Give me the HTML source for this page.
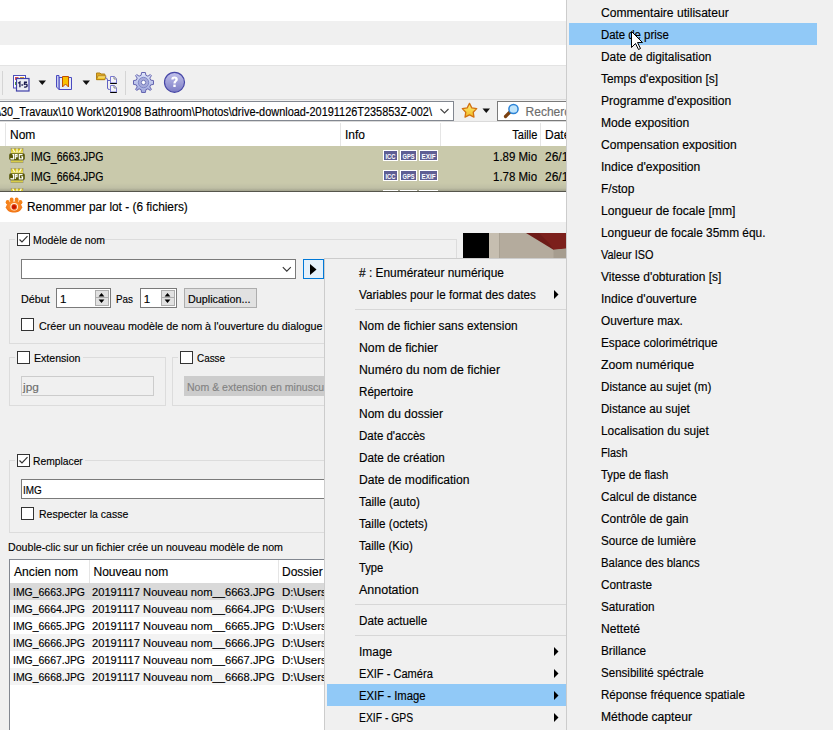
<!DOCTYPE html>
<html><head><meta charset="utf-8"><style>
html,body{margin:0;padding:0;width:833px;height:730px;overflow:hidden;background:#f0f0f0;font-family:"Liberation Sans", sans-serif;}
#root{position:relative;width:833px;height:730px;overflow:hidden;}
</style></head><body><div id="root">
<div style="position:absolute;left:0px;top:0px;width:566px;height:21px;background:#fff"></div>
<div style="position:absolute;left:0px;top:21px;width:566px;height:24px;background:#f0f0f0"></div>
<div style="position:absolute;left:0px;top:45px;width:566px;height:20px;background:#fff"></div>
<div style="position:absolute;left:0px;top:65px;width:566px;height:1px;background:#e3e3e3"></div>
<div style="position:absolute;left:0px;top:66px;width:566px;height:33px;background:#f0f0f0"></div>
<div style="position:absolute;left:2px;top:71px;width:1px;height:24px;background:#d5d5d5"></div>
<div style="position:absolute;left:125px;top:71px;width:1px;height:24px;background:#d5d5d5"></div>
<svg style="position:absolute;left:12px;top:74px" width="19" height="18">
<rect x="1.5" y="1.5" width="12" height="12.5" fill="#fff" stroke="#5050b8" stroke-width="1"/>
<rect x="3" y="3" width="3.5" height="3" fill="#e05050"/><rect x="8" y="3" width="4" height="2.5" fill="#f0a020"/><rect x="3" y="8" width="1.5" height="3" fill="#50a030"/>
<rect x="4.5" y="4.5" width="12.5" height="12.5" fill="#eceef4" stroke="#4040a8" stroke-width="1.2"/>
<path d="M6.2 9.3 L7.9 8 L7.9 13.2 M9.4 11 L10.9 11 M15 8.2 L12.6 8.2 L12.4 10.4 C14.6 9.8 15.2 10.7 15.1 11.6 C15 13 13.6 13.4 12.1 12.9" fill="none" stroke="#1c1c50" stroke-width="1.35"/>
</svg>
<svg style="position:absolute;left:38px;top:80px" width="9" height="6"><path d="M0.5 0.5 L8 0.5 L4.25 5 Z" fill="#111"/></svg>
<svg style="position:absolute;left:55px;top:74px" width="18" height="17">
<path d="M4 3.5 L16.5 3.5 L16.5 15.5 L4 15.5 Z" fill="#e8ecf6" stroke="#4a4ac0"/>
<path d="M1.5 1.5 L4 1.5 L4 15.5 L1.5 13 Z" fill="#c8cef0" stroke="#4a4ac0"/>
<path d="M7.5 2.5 L13.5 2.5 L13.5 13 L10.5 10 L7.5 13 Z" fill="#f8c000" stroke="#c05000"/>
</svg>
<svg style="position:absolute;left:82px;top:80px" width="9" height="6"><path d="M0.5 0.5 L8 0.5 L4.25 5 Z" fill="#111"/></svg>
<svg style="position:absolute;left:95px;top:71px" width="24" height="23">
<defs><linearGradient id="fg" x1="0" y1="0" x2="0" y2="1"><stop offset="0" stop-color="#fff0a0"/><stop offset="1" stop-color="#f0b800"/></linearGradient></defs>
<path d="M1.5 2 L5 2 L6 3 L9.8 3 L9.8 8.6 L1.5 8.6 Z" fill="#e0a820" stroke="#b08018" stroke-width="1"/>
<path d="M3 4.8 L11 4.8 L9.8 8.6 L1.5 8.6 Z" fill="url(#fg)" stroke="#b08018" stroke-width="0.9"/>
<path d="M10.2 6.8 Q12.5 6.8 12.5 9 L12.5 17 Q12.5 18.5 14.5 18.5 L15.5 18.5 M12.5 9.5 L15.5 9.5" fill="none" stroke="#6262c4" stroke-width="1"/>
<path d="M15.5 5.5 L19.3 5.5 L21.5 7.7 L21.5 12 L15.5 12 Z" fill="#f4f4f8" stroke="#7878d4"/>
<path d="M19 5.5 L19 8 L21.5 8" fill="none" stroke="#888"/>
<rect x="15.2" y="12" width="6.6" height="1" fill="#000"/>
<path d="M15.5 14.5 L19.3 14.5 L21.5 16.7 L21.5 21 L15.5 21 Z" fill="#f4f4f8" stroke="#7878d4"/>
<path d="M19 14.5 L19 17 L21.5 17" fill="none" stroke="#888"/>
<rect x="15.2" y="21" width="6.6" height="1" fill="#000"/>
</svg>
<svg style="position:absolute;left:132px;top:71px" width="23" height="23">
<defs><linearGradient id="gg" x1="0" y1="0" x2="0" y2="1"><stop offset="0" stop-color="#dfe6fb"/><stop offset="1" stop-color="#9ea6dc"/></linearGradient></defs>
<path fill="url(#gg)" stroke="#6464b0" stroke-width="1" d="M9.6 1.5 L13.4 1.5 L13.9 4.3 L15.9 5.2 L18.3 3.6 L19.4 4.7 L17.8 7.1 L18.7 9.1 L21.5 9.6 L21.5 13.4 L18.7 13.9 L17.8 15.9 L19.4 18.3 L18.3 19.4 L15.9 17.8 L13.9 18.7 L13.4 21.5 L9.6 21.5 L9.1 18.7 L7.1 17.8 L4.7 19.4 L3.6 18.3 L5.2 15.9 L4.3 13.9 L1.5 13.4 L1.5 9.6 L4.3 9.1 L5.2 7.1 L3.6 4.7 L4.7 3.6 L7.1 5.2 L9.1 4.3 Z"/>
<circle cx="11.5" cy="11.5" r="5.2" fill="#a6aada" stroke="#8088c8"/>
<circle cx="11.5" cy="11.5" r="2.2" fill="#fff" stroke="#7078b8"/>
</svg>
<svg style="position:absolute;left:163px;top:71px" width="23" height="23">
<defs><linearGradient id="hg" x1="0" y1="0" x2="0" y2="1"><stop offset="0" stop-color="#c2c2ec"/><stop offset="1" stop-color="#7c7cc4"/></linearGradient></defs>
<circle cx="11.5" cy="11.3" r="10" fill="url(#hg)" stroke="#4646a6" stroke-width="1.2"/>
<path d="M8.3 8.6 C8.3 6.2 9.8 5.6 11.5 5.6 C13.4 5.6 14.8 6.6 14.8 8.4 C14.8 10.4 12.6 10.6 12.6 12.4 L10.4 12.4 C10.4 10 12.4 9.8 12.4 8.6 C12.4 7.8 12 7.5 11.5 7.5 C10.9 7.5 10.6 7.9 10.6 8.6 Z" fill="#fff"/>
<rect x="10.3" y="13.6" width="2.4" height="2.4" fill="#fff"/>
</svg>
<div style="position:absolute;left:0px;top:99px;width:566px;height:1px;background:#dadada"></div>
<div style="position:absolute;left:0px;top:100px;width:566px;height:22px;background:#f0f0f0"></div>
<div style="position:absolute;left:-1px;top:101px;width:455px;height:20px;background:#fff;border:1px solid #828790;box-sizing:border-box"></div>
<div style="position:absolute;left:0px;top:121px;width:566px;height:1px;background:#dadada"></div>
<div style="position:absolute;left:0px;top:102px;width:440px;height:18px;overflow:hidden">
<div style='position:absolute;left:-2.00px;top:4px;font:normal 12px/12px "Liberation Sans", sans-serif;color:#000;white-space:pre;-webkit-text-stroke:0.15px currentColor;transform:scaleX(0.9103);transform-origin:left top;'>\30_Travaux\10 Work\201908 Bathroom\Photos\drive-download-20191126T235853Z-002\</div>
</div>
<svg style="position:absolute;left:440px;top:108px" width="10" height="7"><path d="M0.5 1 L4.5 5 L8.5 1" fill="none" stroke="#444" stroke-width="1.1"/></svg>
<svg style="position:absolute;left:461px;top:102px" width="17" height="17">
<defs><linearGradient id="sg" x1="0" y1="0" x2="0" y2="1"><stop offset="0" stop-color="#fff27a"/><stop offset="1" stop-color="#f0b820"/></linearGradient></defs>
<path d="M8.50 1.40 L10.79 5.84 L15.73 6.65 L12.21 10.21 L12.97 15.15 L8.50 12.90 L4.03 15.15 L4.79 10.21 L1.27 6.65 L6.21 5.84 Z" fill="url(#sg)" stroke="#d27212" stroke-width="1.3" stroke-linejoin="round"/>
</svg>
<svg style="position:absolute;left:482px;top:108px" width="9" height="6"><path d="M0.5 0.5 L8 0.5 L4.25 5 Z" fill="#111"/></svg>
<div style="position:absolute;left:497px;top:101px;width:80px;height:20px;background:#fff;border:1px solid #7a7a7a;box-sizing:border-box"></div>
<svg style="position:absolute;left:503px;top:103px" width="17" height="16">
<path d="M2.5 13.5 L7 9" stroke="#7a4010" stroke-width="3.2" stroke-linecap="round"/>
<circle cx="10.5" cy="6" r="4.6" fill="#bfe4fb" stroke="#2a82d6" stroke-width="1.5"/>
</svg>
<div style='position:absolute;left:525.60px;top:106px;font:normal 12px/12px "Liberation Sans", sans-serif;color:#6d6d6d;white-space:pre;-webkit-text-stroke:0.15px currentColor;'>Recherche</div>
<div style="position:absolute;left:0px;top:122px;width:566px;height:24px;background:#fff"></div>
<div style="position:absolute;left:5px;top:123px;width:1px;height:23px;background:#e5e5e5"></div>
<div style="position:absolute;left:340px;top:123px;width:1px;height:23px;background:#e5e5e5"></div>
<div style="position:absolute;left:440px;top:123px;width:1px;height:23px;background:#e5e5e5"></div>
<div style="position:absolute;left:540px;top:123px;width:1px;height:23px;background:#e5e5e5"></div>
<div style='position:absolute;left:10.00px;top:129px;font:normal 12px/12px "Liberation Sans", sans-serif;color:#000;white-space:pre;-webkit-text-stroke:0.15px currentColor;'>Nom</div>
<div style='position:absolute;left:345.00px;top:129px;font:normal 12px/12px "Liberation Sans", sans-serif;color:#000;white-space:pre;-webkit-text-stroke:0.15px currentColor;'>Info</div>
<div style='position:absolute;left:509.64px;top:129px;font:normal 12px/12px "Liberation Sans", sans-serif;color:#000;white-space:pre;-webkit-text-stroke:0.15px currentColor;transform:scaleX(0.9174);transform-origin:right top;'>Taille</div>
<div style='position:absolute;left:545.00px;top:129px;font:normal 12px/12px "Liberation Sans", sans-serif;color:#000;white-space:pre;-webkit-text-stroke:0.15px currentColor;'>Date</div>
<div style="position:absolute;left:0px;top:146px;width:566px;height:45px;background:linear-gradient(#c9c9ab 0px,#c9c9ab 37px,#bfbfa5 42px,#a2a28d 45px)"></div>
<div style="position:absolute;left:0px;top:191px;width:566px;height:1px;background:#55554c"></div>
<div style='position:absolute;left:31.00px;top:151px;font:normal 12px/12px "Liberation Sans", sans-serif;color:#000;white-space:pre;-webkit-text-stroke:0.15px currentColor;transform:scaleX(0.8765);transform-origin:left top;'>IMG_6663.JPG</div>
<div style='position:absolute;left:491.47px;top:151px;font:normal 12px/12px "Liberation Sans", sans-serif;color:#000;white-space:pre;-webkit-text-stroke:0.15px currentColor;transform:scaleX(0.9559);transform-origin:right top;'>1.89 Mio</div>
<div style='position:absolute;left:545.00px;top:151px;font:normal 12px/12px "Liberation Sans", sans-serif;color:#000;white-space:pre;-webkit-text-stroke:0.15px currentColor;'>26/1</div>
<div style='position:absolute;left:31.00px;top:171px;font:normal 12px/12px "Liberation Sans", sans-serif;color:#000;white-space:pre;-webkit-text-stroke:0.15px currentColor;transform:scaleX(0.8765);transform-origin:left top;'>IMG_6664.JPG</div>
<div style='position:absolute;left:491.47px;top:171px;font:normal 12px/12px "Liberation Sans", sans-serif;color:#000;white-space:pre;-webkit-text-stroke:0.15px currentColor;transform:scaleX(0.9559);transform-origin:right top;'>1.78 Mio</div>
<div style='position:absolute;left:545.00px;top:171px;font:normal 12px/12px "Liberation Sans", sans-serif;color:#000;white-space:pre;-webkit-text-stroke:0.15px currentColor;'>26/1</div>
<svg style="position:absolute;left:9px;top:147px" width="17" height="17">
<defs><linearGradient id="jg0" x1="0" y1="0" x2="0" y2="1"><stop offset="0" stop-color="#c8b400"/><stop offset="1" stop-color="#f4ec90"/></linearGradient>
<linearGradient id="jb0" x1="0" y1="0" x2="0" y2="1"><stop offset="0" stop-color="#f8f4c0"/><stop offset="1" stop-color="#c8b800"/></linearGradient></defs>
<rect x="1.5" y="1" width="13" height="15" fill="#9a9aa8"/>
<rect x="2" y="1.6" width="12" height="5.4" fill="url(#jg0)"/>
<path d="M3.6 1.6 L5.6 5 M8 1.6 L8 5.2 M12.4 1.6 L10.4 5" stroke="#fffbe0" stroke-width="1.2"/>
<rect x="2" y="13" width="12" height="2.4" fill="url(#jb0)"/>
<rect x="0.2" y="6.2" width="15.6" height="7.2" rx="1.8" fill="#585808"/>
<path d="M3.4 7.6 L4.6 7.6 L4.6 11.9 L2 11.9 L2 10.9 M6.3 11.9 L6.3 7.6 L8.1 7.6 L8.1 9.7 L6.3 9.7 M13.6 7.6 L10.3 7.6 L10.3 11.9 L13.6 11.9 L13.6 9.9 L12.2 9.9" fill="none" stroke="#fff" stroke-width="1.1"/>
</svg>
<svg style="position:absolute;left:383px;top:150px" width="15" height="11"><rect x="0" y="0" width="15" height="11" fill="#fff"/><rect x="1" y="1" width="13" height="9" fill="#5e5e94"/><text x="7.5" y="8.6" font-family="Liberation Sans" font-weight="bold" font-size="7.4" fill="#fff" text-anchor="middle" textLength="10" lengthAdjust="spacingAndGlyphs">ICC</text></svg>
<svg style="position:absolute;left:400px;top:150px" width="17" height="11"><rect x="0" y="0" width="17" height="11" fill="#fff"/><rect x="1" y="1" width="15" height="9" fill="#5e5e94"/><text x="8.5" y="8.6" font-family="Liberation Sans" font-weight="bold" font-size="7.4" fill="#fff" text-anchor="middle" textLength="12" lengthAdjust="spacingAndGlyphs">GPS</text></svg>
<svg style="position:absolute;left:419px;top:150px" width="19" height="11"><rect x="0" y="0" width="19" height="11" fill="#fff"/><rect x="1" y="1" width="17" height="9" fill="#5e5e94"/><text x="9.5" y="8.6" font-family="Liberation Sans" font-weight="bold" font-size="7.4" fill="#fff" text-anchor="middle" textLength="14" lengthAdjust="spacingAndGlyphs">EXIF</text></svg>
<svg style="position:absolute;left:9px;top:167px" width="17" height="17">
<defs><linearGradient id="jg1" x1="0" y1="0" x2="0" y2="1"><stop offset="0" stop-color="#c8b400"/><stop offset="1" stop-color="#f4ec90"/></linearGradient>
<linearGradient id="jb1" x1="0" y1="0" x2="0" y2="1"><stop offset="0" stop-color="#f8f4c0"/><stop offset="1" stop-color="#c8b800"/></linearGradient></defs>
<rect x="1.5" y="1" width="13" height="15" fill="#9a9aa8"/>
<rect x="2" y="1.6" width="12" height="5.4" fill="url(#jg1)"/>
<path d="M3.6 1.6 L5.6 5 M8 1.6 L8 5.2 M12.4 1.6 L10.4 5" stroke="#fffbe0" stroke-width="1.2"/>
<rect x="2" y="13" width="12" height="2.4" fill="url(#jb1)"/>
<rect x="0.2" y="6.2" width="15.6" height="7.2" rx="1.8" fill="#585808"/>
<path d="M3.4 7.6 L4.6 7.6 L4.6 11.9 L2 11.9 L2 10.9 M6.3 11.9 L6.3 7.6 L8.1 7.6 L8.1 9.7 L6.3 9.7 M13.6 7.6 L10.3 7.6 L10.3 11.9 L13.6 11.9 L13.6 9.9 L12.2 9.9" fill="none" stroke="#fff" stroke-width="1.1"/>
</svg>
<svg style="position:absolute;left:383px;top:170px" width="15" height="11"><rect x="0" y="0" width="15" height="11" fill="#fff"/><rect x="1" y="1" width="13" height="9" fill="#5e5e94"/><text x="7.5" y="8.6" font-family="Liberation Sans" font-weight="bold" font-size="7.4" fill="#fff" text-anchor="middle" textLength="10" lengthAdjust="spacingAndGlyphs">ICC</text></svg>
<svg style="position:absolute;left:400px;top:170px" width="17" height="11"><rect x="0" y="0" width="17" height="11" fill="#fff"/><rect x="1" y="1" width="15" height="9" fill="#5e5e94"/><text x="8.5" y="8.6" font-family="Liberation Sans" font-weight="bold" font-size="7.4" fill="#fff" text-anchor="middle" textLength="12" lengthAdjust="spacingAndGlyphs">GPS</text></svg>
<svg style="position:absolute;left:419px;top:170px" width="19" height="11"><rect x="0" y="0" width="19" height="11" fill="#fff"/><rect x="1" y="1" width="17" height="9" fill="#5e5e94"/><text x="9.5" y="8.6" font-family="Liberation Sans" font-weight="bold" font-size="7.4" fill="#fff" text-anchor="middle" textLength="14" lengthAdjust="spacingAndGlyphs">EXIF</text></svg>
<div style="position:absolute;left:0px;top:186px;width:566px;height:5px;overflow:hidden">
<svg style="position:absolute;left:9px;top:1px" width="17" height="17">
<defs><linearGradient id="jg2" x1="0" y1="0" x2="0" y2="1"><stop offset="0" stop-color="#c8b400"/><stop offset="1" stop-color="#f4ec90"/></linearGradient>
<linearGradient id="jb2" x1="0" y1="0" x2="0" y2="1"><stop offset="0" stop-color="#f8f4c0"/><stop offset="1" stop-color="#c8b800"/></linearGradient></defs>
<rect x="1.5" y="1" width="13" height="15" fill="#9a9aa8"/>
<rect x="2" y="1.6" width="12" height="5.4" fill="url(#jg2)"/>
<path d="M3.6 1.6 L5.6 5 M8 1.6 L8 5.2 M12.4 1.6 L10.4 5" stroke="#fffbe0" stroke-width="1.2"/>
<rect x="2" y="13" width="12" height="2.4" fill="url(#jb2)"/>
<rect x="0.2" y="6.2" width="15.6" height="7.2" rx="1.8" fill="#585808"/>
<path d="M3.4 7.6 L4.6 7.6 L4.6 11.9 L2 11.9 L2 10.9 M6.3 11.9 L6.3 7.6 L8.1 7.6 L8.1 9.7 L6.3 9.7 M13.6 7.6 L10.3 7.6 L10.3 11.9 L13.6 11.9 L13.6 9.9 L12.2 9.9" fill="none" stroke="#fff" stroke-width="1.1"/>
</svg>
<svg style="position:absolute;left:383px;top:3.5px" width="15" height="11"><rect x="0" y="0" width="15" height="11" fill="#fff"/><rect x="1" y="1" width="13" height="9" fill="#5e5e94"/><text x="7.5" y="8.6" font-family="Liberation Sans" font-weight="bold" font-size="7.4" fill="#fff" text-anchor="middle" textLength="10" lengthAdjust="spacingAndGlyphs">ICC</text></svg>
<svg style="position:absolute;left:400px;top:3.5px" width="17" height="11"><rect x="0" y="0" width="17" height="11" fill="#fff"/><rect x="1" y="1" width="15" height="9" fill="#5e5e94"/><text x="8.5" y="8.6" font-family="Liberation Sans" font-weight="bold" font-size="7.4" fill="#fff" text-anchor="middle" textLength="12" lengthAdjust="spacingAndGlyphs">GPS</text></svg>
<svg style="position:absolute;left:419px;top:3.5px" width="19" height="11"><rect x="0" y="0" width="19" height="11" fill="#fff"/><rect x="1" y="1" width="17" height="9" fill="#5e5e94"/><text x="9.5" y="8.6" font-family="Liberation Sans" font-weight="bold" font-size="7.4" fill="#fff" text-anchor="middle" textLength="14" lengthAdjust="spacingAndGlyphs">EXIF</text></svg>
</div>
<div style="position:absolute;left:0px;top:192px;width:566px;height:30px;background:#fff"></div>
<div style="position:absolute;left:0px;top:222px;width:566px;height:508px;background:#f0f0f0"></div>
<div style='position:absolute;left:27.40px;top:201px;font:normal 12px/12px "Liberation Sans", sans-serif;color:#000;white-space:pre;-webkit-text-stroke:0.15px currentColor;transform:scaleX(0.9882);transform-origin:left top;'>Renommer par lot - (6 fichiers)</div>
<svg style="position:absolute;left:5px;top:197px" width="18" height="17">
<defs><radialGradient id="eg" cx="0.5" cy="0.4" r="0.7"><stop offset="0" stop-color="#ffa040"/><stop offset="1" stop-color="#ee6a08"/></radialGradient></defs>
<g fill="#f58218"><ellipse cx="2.7" cy="5.3" rx="2" ry="2.2"/><ellipse cx="6.6" cy="2.9" rx="2" ry="2.3"/><ellipse cx="11.6" cy="2.9" rx="2" ry="2.3"/><ellipse cx="15.4" cy="5.3" rx="2" ry="2.2"/></g>
<path d="M0.8 10.3 C2 5.5 5.5 4.5 9 4.5 C12.5 4.5 16 5.5 17.2 10.3 C16 14.5 12.5 15.6 9 15.6 C5.5 15.6 2 14.5 0.8 10.3 Z" fill="url(#eg)"/>
<circle cx="9.2" cy="9.8" r="3.8" fill="#fff3e6"/>
<circle cx="9.2" cy="9.9" r="2.8" fill="#e85010"/>
<circle cx="9" cy="10" r="2.1" fill="#c41400"/>
</svg>
<div style="position:absolute;left:463px;top:233px;width:26px;height:25px;background:#000"></div>
<svg style="position:absolute;left:489px;top:233px" width="77" height="25">
<rect width="77" height="25" fill="#b4ab9d"/>
<rect x="0" y="0" width="10" height="25" fill="#c6beb0"/>
<rect x="10" y="0" width="1" height="25" fill="#aaa294"/>
<path d="M37 0 L77 0 L77 15.5 L64.5 16.7 Z" fill="#6e1b18"/>
<path d="M50 0 L77 0 L77 15.5 L64.5 16.7 L60 10 Z" fill="#7c201c"/>
<rect x="54" y="9" width="4" height="10" fill="#9a9085" opacity="0.0"/>
<path d="M64.5 16.7 L77 15.5 L77 25 L64.5 25 Z" fill="#a69d8f"/>
</svg>
<div style="position:absolute;left:9px;top:239px;width:448px;height:105px;border:1px solid #dcdcdc;box-sizing:border-box"></div>
<div style="position:absolute;left:15px;top:232px;width:80px;height:14px;background:#f0f0f0"></div>
<div style='position:absolute;left:33.40px;top:235px;font:normal 11.5px/11.5px "Liberation Sans", sans-serif;color:#000;white-space:pre;-webkit-text-stroke:0.15px currentColor;transform:scaleX(0.9082);transform-origin:left top;'>Modèle de nom</div>
<div style="position:absolute;left:21px;top:259px;width:275px;height:20px;background:#fff;border:1px solid #7a7a7a;box-sizing:border-box"></div>
<svg style="position:absolute;left:282px;top:266px" width="10" height="7"><path d="M0.8 1.2 L4.8 5.2 L8.8 1.2" fill="none" stroke="#333" stroke-width="1.1"/></svg>
<div style="position:absolute;left:303px;top:259px;width:21px;height:20px;background:#e5f1fb;border:1px solid #0078d7;box-sizing:border-box"></div>
<svg style="position:absolute;left:309px;top:263px" width="9" height="13"><path d="M1 1 L7.5 6.5 L1 12 Z" fill="#000"/></svg>
<div style='position:absolute;left:20.50px;top:294px;font:normal 11.5px/11.5px "Liberation Sans", sans-serif;color:#000;white-space:pre;-webkit-text-stroke:0.15px currentColor;transform:scaleX(0.9385);transform-origin:left top;'>Début</div>
<div style="position:absolute;left:56px;top:288px;width:55px;height:20px;background:#fff;border:1px solid #7a7a7a;box-sizing:border-box"></div>
<div style='position:absolute;left:60.00px;top:294px;font:normal 11.5px/11.5px "Liberation Sans", sans-serif;color:#000;white-space:pre;-webkit-text-stroke:0.15px currentColor;'>1</div>
<div style="position:absolute;left:95px;top:290px;width:14px;height:8px;background:#e1e1e1;border:1px solid #adadad;box-sizing:border-box"></div>
<div style="position:absolute;left:95px;top:297px;width:14px;height:9px;background:#e1e1e1;border:1px solid #adadad;box-sizing:border-box"></div>
<svg style="position:absolute;left:98px;top:292px" width="8" height="12"><path d="M0.6 4.4 L3.5 0.9 L6.4 4.4 Z M0.6 7.6 L6.4 7.6 L3.5 11.1 Z" fill="#000"/></svg>
<div style='position:absolute;left:116.00px;top:294px;font:normal 11.5px/11.5px "Liberation Sans", sans-serif;color:#000;white-space:pre;-webkit-text-stroke:0.15px currentColor;transform:scaleX(0.8574);transform-origin:left top;'>Pas</div>
<div style="position:absolute;left:140px;top:288px;width:37px;height:20px;background:#fff;border:1px solid #7a7a7a;box-sizing:border-box"></div>
<div style='position:absolute;left:143.70px;top:294px;font:normal 11.5px/11.5px "Liberation Sans", sans-serif;color:#000;white-space:pre;-webkit-text-stroke:0.15px currentColor;'>1</div>
<div style="position:absolute;left:161px;top:290px;width:14px;height:8px;background:#e1e1e1;border:1px solid #adadad;box-sizing:border-box"></div>
<div style="position:absolute;left:161px;top:297px;width:14px;height:9px;background:#e1e1e1;border:1px solid #adadad;box-sizing:border-box"></div>
<svg style="position:absolute;left:164px;top:292px" width="8" height="12"><path d="M0.6 4.4 L3.5 0.9 L6.4 4.4 Z M0.6 7.6 L6.4 7.6 L3.5 11.1 Z" fill="#000"/></svg>
<div style="position:absolute;left:184px;top:288px;width:73px;height:20px;background:#e1e1e1;border:1px solid #adadad;box-sizing:border-box"></div>
<div style='position:absolute;left:187.60px;top:294px;font:normal 11.5px/11.5px "Liberation Sans", sans-serif;color:#000;white-space:pre;-webkit-text-stroke:0.15px currentColor;transform:scaleX(0.9386);transform-origin:left top;'>Duplication...</div>
<div style="position:absolute;left:21px;top:318px;width:13px;height:13px;background:#fff;border:1px solid #333;box-sizing:border-box"></div>
<div style='position:absolute;left:38.50px;top:321px;font:normal 11.5px/11.5px "Liberation Sans", sans-serif;color:#000;white-space:pre;-webkit-text-stroke:0.15px currentColor;transform:scaleX(0.9347);transform-origin:left top;'>Créer un nouveau modèle de nom à l&#x27;ouverture du dialogue</div>
<svg style="position:absolute;left:17px;top:233px" width="13" height="13"><rect x="0.5" y="0.5" width="12" height="12" fill="#fff" stroke="#333"/><path d="M2.5 6.5 L5 9 L10.5 3.2" fill="none" stroke="#333" stroke-width="1.2"/></svg>
<div style="position:absolute;left:9px;top:357px;width:157px;height:49px;border:1px solid #dcdcdc;box-sizing:border-box"></div>
<div style="position:absolute;left:15px;top:350px;width:68px;height:14px;background:#f0f0f0"></div>
<div style="position:absolute;left:17px;top:351px;width:13px;height:13px;background:#fff;border:1px solid #333;box-sizing:border-box"></div>
<div style='position:absolute;left:33.50px;top:353px;font:normal 11.5px/11.5px "Liberation Sans", sans-serif;color:#000;white-space:pre;-webkit-text-stroke:0.15px currentColor;transform:scaleX(0.9205);transform-origin:left top;'>Extension</div>
<div style="position:absolute;left:21px;top:376px;width:133px;height:20px;background:#f0f0f0;border:1px solid #cccccc;box-sizing:border-box"></div>
<div style='position:absolute;left:22.70px;top:382px;font:normal 11.5px/11.5px "Liberation Sans", sans-serif;color:#6d6d6d;white-space:pre;-webkit-text-stroke:0.15px currentColor;transform:scaleX(1.0287);transform-origin:left top;'>jpg</div>
<div style="position:absolute;left:172px;top:357px;width:300px;height:49px;border:1px solid #dcdcdc;box-sizing:border-box"></div>
<div style="position:absolute;left:178px;top:350px;width:52px;height:14px;background:#f0f0f0"></div>
<div style="position:absolute;left:180px;top:351px;width:13px;height:13px;background:#fff;border:1px solid #333;box-sizing:border-box"></div>
<div style='position:absolute;left:196.70px;top:353px;font:normal 11.5px/11.5px "Liberation Sans", sans-serif;color:#000;white-space:pre;-webkit-text-stroke:0.15px currentColor;transform:scaleX(0.8617);transform-origin:left top;'>Casse</div>
<div style="position:absolute;left:184px;top:376px;width:200px;height:20px;background:#cccccc"></div>
<div style='position:absolute;left:187.40px;top:382px;font:normal 11.5px/11.5px "Liberation Sans", sans-serif;color:#838383;white-space:pre;-webkit-text-stroke:0.15px currentColor;transform:scaleX(0.9161);transform-origin:left top;'>Nom &amp; extension en minuscules</div>
<div style="position:absolute;left:9px;top:460px;width:500px;height:73px;border:1px solid #dcdcdc;box-sizing:border-box"></div>
<div style="position:absolute;left:15px;top:453px;width:70px;height:14px;background:#f0f0f0"></div>
<svg style="position:absolute;left:17px;top:454px" width="13" height="13"><rect x="0.5" y="0.5" width="12" height="12" fill="#fff" stroke="#333"/><path d="M2.5 6.5 L5 9 L10.5 3.2" fill="none" stroke="#333" stroke-width="1.2"/></svg>
<div style='position:absolute;left:33.00px;top:456px;font:normal 11.5px/11.5px "Liberation Sans", sans-serif;color:#000;white-space:pre;-webkit-text-stroke:0.15px currentColor;transform:scaleX(0.8955);transform-origin:left top;'>Remplacer</div>
<div style="position:absolute;left:21px;top:479px;width:400px;height:20px;background:#fff;border:1px solid #7a7a7a;box-sizing:border-box"></div>
<div style='position:absolute;left:23.30px;top:485px;font:normal 11.5px/11.5px "Liberation Sans", sans-serif;color:#000;white-space:pre;-webkit-text-stroke:0.15px currentColor;transform:scaleX(0.8650);transform-origin:left top;'>IMG</div>
<div style="position:absolute;left:21px;top:507px;width:13px;height:13px;background:#fff;border:1px solid #333;box-sizing:border-box"></div>
<div style='position:absolute;left:38.80px;top:509px;font:normal 11.5px/11.5px "Liberation Sans", sans-serif;color:#000;white-space:pre;-webkit-text-stroke:0.15px currentColor;transform:scaleX(0.9131);transform-origin:left top;'>Respecter la casse</div>
<div style='position:absolute;left:8.40px;top:542px;font:normal 11.5px/11.5px "Liberation Sans", sans-serif;color:#000;white-space:pre;-webkit-text-stroke:0.15px currentColor;transform:scaleX(0.9251);transform-origin:left top;'>Double-clic sur un fichier crée un nouveau modèle de nom</div>
<div style="position:absolute;left:9px;top:559px;width:500px;height:180px;background:#fff;border:1px solid #828790;box-sizing:border-box"></div>
<div style="position:absolute;left:89px;top:560px;width:1px;height:23px;background:#e5e5e5"></div>
<div style="position:absolute;left:278px;top:560px;width:1px;height:23px;background:#e5e5e5"></div>
<div style='position:absolute;left:14.40px;top:566px;font:normal 12px/12px "Liberation Sans", sans-serif;color:#000;white-space:pre;-webkit-text-stroke:0.15px currentColor;transform:scaleX(1.0099);transform-origin:left top;'>Ancien nom</div>
<div style='position:absolute;left:93.50px;top:566px;font:normal 12px/12px "Liberation Sans", sans-serif;color:#000;white-space:pre;-webkit-text-stroke:0.15px currentColor;'>Nouveau nom</div>
<div style='position:absolute;left:282.00px;top:566px;font:normal 12px/12px "Liberation Sans", sans-serif;color:#000;white-space:pre;-webkit-text-stroke:0.15px currentColor;'>Dossier</div>
<div style="position:absolute;left:10px;top:583px;width:400px;height:17px;background:#d9d9d9"></div>
<div style='position:absolute;left:13.40px;top:587px;font:normal 11.5px/11.5px "Liberation Sans", sans-serif;color:#000;white-space:pre;-webkit-text-stroke:0.15px currentColor;transform:scaleX(0.9083);transform-origin:left top;'>IMG_6663.JPG</div>
<div style='position:absolute;left:92.00px;top:587px;font:normal 11.5px/11.5px "Liberation Sans", sans-serif;color:#000;white-space:pre;-webkit-text-stroke:0.15px currentColor;transform:scaleX(0.9702);transform-origin:left top;'>20191117 Nouveau nom__6663.JPG</div>
<div style='position:absolute;left:282.00px;top:587px;font:normal 11.5px/11.5px "Liberation Sans", sans-serif;color:#000;white-space:pre;-webkit-text-stroke:0.15px currentColor;'>D:\Users</div>
<div style="position:absolute;left:10px;top:600px;width:400px;height:17px;background:#f3f3f3"></div>
<div style='position:absolute;left:13.40px;top:604px;font:normal 11.5px/11.5px "Liberation Sans", sans-serif;color:#000;white-space:pre;-webkit-text-stroke:0.15px currentColor;transform:scaleX(0.9083);transform-origin:left top;'>IMG_6664.JPG</div>
<div style='position:absolute;left:92.00px;top:604px;font:normal 11.5px/11.5px "Liberation Sans", sans-serif;color:#000;white-space:pre;-webkit-text-stroke:0.15px currentColor;transform:scaleX(0.9702);transform-origin:left top;'>20191117 Nouveau nom__6664.JPG</div>
<div style='position:absolute;left:282.00px;top:604px;font:normal 11.5px/11.5px "Liberation Sans", sans-serif;color:#000;white-space:pre;-webkit-text-stroke:0.15px currentColor;'>D:\Users</div>
<div style="position:absolute;left:10px;top:617px;width:400px;height:17px;background:#fff"></div>
<div style='position:absolute;left:13.40px;top:621px;font:normal 11.5px/11.5px "Liberation Sans", sans-serif;color:#000;white-space:pre;-webkit-text-stroke:0.15px currentColor;transform:scaleX(0.9083);transform-origin:left top;'>IMG_6665.JPG</div>
<div style='position:absolute;left:92.00px;top:621px;font:normal 11.5px/11.5px "Liberation Sans", sans-serif;color:#000;white-space:pre;-webkit-text-stroke:0.15px currentColor;transform:scaleX(0.9702);transform-origin:left top;'>20191117 Nouveau nom__6665.JPG</div>
<div style='position:absolute;left:282.00px;top:621px;font:normal 11.5px/11.5px "Liberation Sans", sans-serif;color:#000;white-space:pre;-webkit-text-stroke:0.15px currentColor;'>D:\Users</div>
<div style="position:absolute;left:10px;top:634px;width:400px;height:17px;background:#f3f3f3"></div>
<div style='position:absolute;left:13.40px;top:638px;font:normal 11.5px/11.5px "Liberation Sans", sans-serif;color:#000;white-space:pre;-webkit-text-stroke:0.15px currentColor;transform:scaleX(0.9083);transform-origin:left top;'>IMG_6666.JPG</div>
<div style='position:absolute;left:92.00px;top:638px;font:normal 11.5px/11.5px "Liberation Sans", sans-serif;color:#000;white-space:pre;-webkit-text-stroke:0.15px currentColor;transform:scaleX(0.9702);transform-origin:left top;'>20191117 Nouveau nom__6666.JPG</div>
<div style='position:absolute;left:282.00px;top:638px;font:normal 11.5px/11.5px "Liberation Sans", sans-serif;color:#000;white-space:pre;-webkit-text-stroke:0.15px currentColor;'>D:\Users</div>
<div style="position:absolute;left:10px;top:651px;width:400px;height:17px;background:#fff"></div>
<div style='position:absolute;left:13.40px;top:655px;font:normal 11.5px/11.5px "Liberation Sans", sans-serif;color:#000;white-space:pre;-webkit-text-stroke:0.15px currentColor;transform:scaleX(0.9083);transform-origin:left top;'>IMG_6667.JPG</div>
<div style='position:absolute;left:92.00px;top:655px;font:normal 11.5px/11.5px "Liberation Sans", sans-serif;color:#000;white-space:pre;-webkit-text-stroke:0.15px currentColor;transform:scaleX(0.9702);transform-origin:left top;'>20191117 Nouveau nom__6667.JPG</div>
<div style='position:absolute;left:282.00px;top:655px;font:normal 11.5px/11.5px "Liberation Sans", sans-serif;color:#000;white-space:pre;-webkit-text-stroke:0.15px currentColor;'>D:\Users</div>
<div style="position:absolute;left:10px;top:668px;width:400px;height:17px;background:#f3f3f3"></div>
<div style='position:absolute;left:13.40px;top:672px;font:normal 11.5px/11.5px "Liberation Sans", sans-serif;color:#000;white-space:pre;-webkit-text-stroke:0.15px currentColor;transform:scaleX(0.9083);transform-origin:left top;'>IMG_6668.JPG</div>
<div style='position:absolute;left:92.00px;top:672px;font:normal 11.5px/11.5px "Liberation Sans", sans-serif;color:#000;white-space:pre;-webkit-text-stroke:0.15px currentColor;transform:scaleX(0.9702);transform-origin:left top;'>20191117 Nouveau nom__6668.JPG</div>
<div style='position:absolute;left:282.00px;top:672px;font:normal 11.5px/11.5px "Liberation Sans", sans-serif;color:#000;white-space:pre;-webkit-text-stroke:0.15px currentColor;'>D:\Users</div>
<div style="position:absolute;left:324px;top:258px;width:243px;height:480px;background:#f0f0f0;border:1px solid #cccccc;box-sizing:border-box"></div>
<div style='position:absolute;left:359.00px;top:267px;font:normal 12px/12px "Liberation Sans", sans-serif;color:#000;white-space:pre;-webkit-text-stroke:0.15px currentColor;transform:scaleX(0.9925);transform-origin:left top;'># : Enumérateur numérique</div>
<div style='position:absolute;left:359.00px;top:289px;font:normal 12px/12px "Liberation Sans", sans-serif;color:#000;white-space:pre;-webkit-text-stroke:0.15px currentColor;transform:scaleX(0.9721);transform-origin:left top;'>Variables pour le format des dates</div>
<svg style="position:absolute;left:554px;top:290px" width="6" height="9"><path d="M0 0 L4.5 4.5 L0 9 Z" fill="#000"/></svg>
<div style="position:absolute;left:355px;top:309px;width:211px;height:1px;background:#d7d7d7"></div>
<div style='position:absolute;left:359.00px;top:320px;font:normal 12px/12px "Liberation Sans", sans-serif;color:#000;white-space:pre;-webkit-text-stroke:0.15px currentColor;transform:scaleX(0.9866);transform-origin:left top;'>Nom de fichier sans extension</div>
<div style='position:absolute;left:359.00px;top:342px;font:normal 12px/12px "Liberation Sans", sans-serif;color:#000;white-space:pre;-webkit-text-stroke:0.15px currentColor;transform:scaleX(1.0197);transform-origin:left top;'>Nom de fichier</div>
<div style='position:absolute;left:359.00px;top:364px;font:normal 12px/12px "Liberation Sans", sans-serif;color:#000;white-space:pre;-webkit-text-stroke:0.15px currentColor;transform:scaleX(1.0212);transform-origin:left top;'>Numéro du nom de fichier</div>
<div style='position:absolute;left:359.00px;top:386px;font:normal 12px/12px "Liberation Sans", sans-serif;color:#000;white-space:pre;-webkit-text-stroke:0.15px currentColor;transform:scaleX(0.9691);transform-origin:left top;'>Répertoire</div>
<div style='position:absolute;left:359.00px;top:408px;font:normal 12px/12px "Liberation Sans", sans-serif;color:#000;white-space:pre;-webkit-text-stroke:0.15px currentColor;'>Nom du dossier</div>
<div style='position:absolute;left:359.00px;top:430px;font:normal 12px/12px "Liberation Sans", sans-serif;color:#000;white-space:pre;-webkit-text-stroke:0.15px currentColor;transform:scaleX(0.9580);transform-origin:left top;'>Date d&#x27;accès</div>
<div style='position:absolute;left:359.00px;top:452px;font:normal 12px/12px "Liberation Sans", sans-serif;color:#000;white-space:pre;-webkit-text-stroke:0.15px currentColor;transform:scaleX(0.9743);transform-origin:left top;'>Date de création</div>
<div style='position:absolute;left:359.00px;top:474px;font:normal 12px/12px "Liberation Sans", sans-serif;color:#000;white-space:pre;-webkit-text-stroke:0.15px currentColor;transform:scaleX(1.0100);transform-origin:left top;'>Date de modification</div>
<div style='position:absolute;left:359.00px;top:496px;font:normal 12px/12px "Liberation Sans", sans-serif;color:#000;white-space:pre;-webkit-text-stroke:0.15px currentColor;transform:scaleX(0.9818);transform-origin:left top;'>Taille (auto)</div>
<div style='position:absolute;left:359.00px;top:518px;font:normal 12px/12px "Liberation Sans", sans-serif;color:#000;white-space:pre;-webkit-text-stroke:0.15px currentColor;transform:scaleX(0.9705);transform-origin:left top;'>Taille (octets)</div>
<div style='position:absolute;left:359.00px;top:540px;font:normal 12px/12px "Liberation Sans", sans-serif;color:#000;white-space:pre;-webkit-text-stroke:0.15px currentColor;transform:scaleX(0.9604);transform-origin:left top;'>Taille (Kio)</div>
<div style='position:absolute;left:359.00px;top:562px;font:normal 12px/12px "Liberation Sans", sans-serif;color:#000;white-space:pre;-webkit-text-stroke:0.15px currentColor;transform:scaleX(0.9302);transform-origin:left top;'>Type</div>
<div style='position:absolute;left:359.00px;top:584px;font:normal 12px/12px "Liberation Sans", sans-serif;color:#000;white-space:pre;-webkit-text-stroke:0.15px currentColor;transform:scaleX(1.0402);transform-origin:left top;'>Annotation</div>
<div style="position:absolute;left:355px;top:604px;width:211px;height:1px;background:#d7d7d7"></div>
<div style='position:absolute;left:359.00px;top:615px;font:normal 12px/12px "Liberation Sans", sans-serif;color:#000;white-space:pre;-webkit-text-stroke:0.15px currentColor;transform:scaleX(0.9736);transform-origin:left top;'>Date actuelle</div>
<div style="position:absolute;left:355px;top:635px;width:211px;height:1px;background:#d7d7d7"></div>
<div style='position:absolute;left:359.00px;top:646px;font:normal 12px/12px "Liberation Sans", sans-serif;color:#000;white-space:pre;-webkit-text-stroke:0.15px currentColor;transform:scaleX(0.9952);transform-origin:left top;'>Image</div>
<svg style="position:absolute;left:554px;top:647px" width="6" height="9"><path d="M0 0 L4.5 4.5 L0 9 Z" fill="#000"/></svg>
<div style='position:absolute;left:359.00px;top:668px;font:normal 12px/12px "Liberation Sans", sans-serif;color:#000;white-space:pre;-webkit-text-stroke:0.15px currentColor;transform:scaleX(0.9223);transform-origin:left top;'>EXIF - Caméra</div>
<svg style="position:absolute;left:554px;top:669px" width="6" height="9"><path d="M0 0 L4.5 4.5 L0 9 Z" fill="#000"/></svg>
<div style="position:absolute;left:327px;top:684px;width:239px;height:22px;background:#91c9f7"></div>
<div style='position:absolute;left:359.00px;top:690px;font:normal 12px/12px "Liberation Sans", sans-serif;color:#000;white-space:pre;-webkit-text-stroke:0.15px currentColor;transform:scaleX(0.9408);transform-origin:left top;'>EXIF - Image</div>
<svg style="position:absolute;left:554px;top:691px" width="6" height="9"><path d="M0 0 L4.5 4.5 L0 9 Z" fill="#000"/></svg>
<div style='position:absolute;left:359.00px;top:712px;font:normal 12px/12px "Liberation Sans", sans-serif;color:#000;white-space:pre;-webkit-text-stroke:0.15px currentColor;transform:scaleX(0.8630);transform-origin:left top;'>EXIF - GPS</div>
<svg style="position:absolute;left:554px;top:713px" width="6" height="9"><path d="M0 0 L4.5 4.5 L0 9 Z" fill="#000"/></svg>
<div style="position:absolute;left:566px;top:-2px;width:270px;height:735px;background:#f0f0f0;border:1px solid #cccccc;box-sizing:border-box"></div>
<div style="position:absolute;left:569px;top:23px;width:248px;height:22px;background:#91c9f7"></div>
<div style='position:absolute;left:601.00px;top:7px;font:normal 12px/12px "Liberation Sans", sans-serif;color:#000;white-space:pre;-webkit-text-stroke:0.15px currentColor;transform:scaleX(1.0077);transform-origin:left top;'>Commentaire utilisateur</div>
<div style='position:absolute;left:601.00px;top:29px;font:normal 12px/12px "Liberation Sans", sans-serif;color:#000;white-space:pre;-webkit-text-stroke:0.15px currentColor;transform:scaleX(0.9499);transform-origin:left top;'>Date de prise</div>
<div style='position:absolute;left:601.00px;top:51px;font:normal 12px/12px "Liberation Sans", sans-serif;color:#000;white-space:pre;-webkit-text-stroke:0.15px currentColor;transform:scaleX(0.9910);transform-origin:left top;'>Date de digitalisation</div>
<div style='position:absolute;left:601.00px;top:73px;font:normal 12px/12px "Liberation Sans", sans-serif;color:#000;white-space:pre;-webkit-text-stroke:0.15px currentColor;transform:scaleX(0.9950);transform-origin:left top;'>Temps d&#x27;exposition [s]</div>
<div style='position:absolute;left:601.00px;top:95px;font:normal 12px/12px "Liberation Sans", sans-serif;color:#000;white-space:pre;-webkit-text-stroke:0.15px currentColor;transform:scaleX(1.0091);transform-origin:left top;'>Programme d&#x27;exposition</div>
<div style='position:absolute;left:601.00px;top:117px;font:normal 12px/12px "Liberation Sans", sans-serif;color:#000;white-space:pre;-webkit-text-stroke:0.15px currentColor;transform:scaleX(1.0104);transform-origin:left top;'>Mode exposition</div>
<div style='position:absolute;left:601.00px;top:139px;font:normal 12px/12px "Liberation Sans", sans-serif;color:#000;white-space:pre;-webkit-text-stroke:0.15px currentColor;transform:scaleX(1.0063);transform-origin:left top;'>Compensation exposition</div>
<div style='position:absolute;left:601.00px;top:161px;font:normal 12px/12px "Liberation Sans", sans-serif;color:#000;white-space:pre;-webkit-text-stroke:0.15px currentColor;transform:scaleX(1.0096);transform-origin:left top;'>Indice d&#x27;exposition</div>
<div style='position:absolute;left:601.00px;top:183px;font:normal 12px/12px "Liberation Sans", sans-serif;color:#000;white-space:pre;-webkit-text-stroke:0.15px currentColor;'>F/stop</div>
<div style='position:absolute;left:601.00px;top:205px;font:normal 12px/12px "Liberation Sans", sans-serif;color:#000;white-space:pre;-webkit-text-stroke:0.15px currentColor;transform:scaleX(1.0124);transform-origin:left top;'>Longueur de focale [mm]</div>
<div style='position:absolute;left:601.00px;top:227px;font:normal 12px/12px "Liberation Sans", sans-serif;color:#000;white-space:pre;-webkit-text-stroke:0.15px currentColor;transform:scaleX(0.9902);transform-origin:left top;'>Longueur de focale 35mm équ.</div>
<div style='position:absolute;left:601.00px;top:249px;font:normal 12px/12px "Liberation Sans", sans-serif;color:#000;white-space:pre;-webkit-text-stroke:0.15px currentColor;transform:scaleX(0.9081);transform-origin:left top;'>Valeur ISO</div>
<div style='position:absolute;left:601.00px;top:271px;font:normal 12px/12px "Liberation Sans", sans-serif;color:#000;white-space:pre;-webkit-text-stroke:0.15px currentColor;transform:scaleX(0.9958);transform-origin:left top;'>Vitesse d&#x27;obturation [s]</div>
<div style='position:absolute;left:601.00px;top:293px;font:normal 12px/12px "Liberation Sans", sans-serif;color:#000;white-space:pre;-webkit-text-stroke:0.15px currentColor;transform:scaleX(1.0072);transform-origin:left top;'>Indice d&#x27;ouverture</div>
<div style='position:absolute;left:601.00px;top:315px;font:normal 12px/12px "Liberation Sans", sans-serif;color:#000;white-space:pre;-webkit-text-stroke:0.15px currentColor;transform:scaleX(0.9903);transform-origin:left top;'>Ouverture max.</div>
<div style='position:absolute;left:601.00px;top:337px;font:normal 12px/12px "Liberation Sans", sans-serif;color:#000;white-space:pre;-webkit-text-stroke:0.15px currentColor;transform:scaleX(0.9820);transform-origin:left top;'>Espace colorimétrique</div>
<div style='position:absolute;left:601.00px;top:359px;font:normal 12px/12px "Liberation Sans", sans-serif;color:#000;white-space:pre;-webkit-text-stroke:0.15px currentColor;transform:scaleX(1.0251);transform-origin:left top;'>Zoom numérique</div>
<div style='position:absolute;left:601.00px;top:381px;font:normal 12px/12px "Liberation Sans", sans-serif;color:#000;white-space:pre;-webkit-text-stroke:0.15px currentColor;transform:scaleX(0.9746);transform-origin:left top;'>Distance au sujet (m)</div>
<div style='position:absolute;left:601.00px;top:403px;font:normal 12px/12px "Liberation Sans", sans-serif;color:#000;white-space:pre;-webkit-text-stroke:0.15px currentColor;transform:scaleX(0.9646);transform-origin:left top;'>Distance au sujet</div>
<div style='position:absolute;left:601.00px;top:425px;font:normal 12px/12px "Liberation Sans", sans-serif;color:#000;white-space:pre;-webkit-text-stroke:0.15px currentColor;transform:scaleX(0.9913);transform-origin:left top;'>Localisation du sujet</div>
<div style='position:absolute;left:601.00px;top:447px;font:normal 12px/12px "Liberation Sans", sans-serif;color:#000;white-space:pre;-webkit-text-stroke:0.15px currentColor;transform:scaleX(0.8997);transform-origin:left top;'>Flash</div>
<div style='position:absolute;left:601.00px;top:469px;font:normal 12px/12px "Liberation Sans", sans-serif;color:#000;white-space:pre;-webkit-text-stroke:0.15px currentColor;transform:scaleX(0.9427);transform-origin:left top;'>Type de flash</div>
<div style='position:absolute;left:601.00px;top:491px;font:normal 12px/12px "Liberation Sans", sans-serif;color:#000;white-space:pre;-webkit-text-stroke:0.15px currentColor;transform:scaleX(0.9759);transform-origin:left top;'>Calcul de distance</div>
<div style='position:absolute;left:601.00px;top:513px;font:normal 12px/12px "Liberation Sans", sans-serif;color:#000;white-space:pre;-webkit-text-stroke:0.15px currentColor;transform:scaleX(0.9936);transform-origin:left top;'>Contrôle de gain</div>
<div style='position:absolute;left:601.00px;top:535px;font:normal 12px/12px "Liberation Sans", sans-serif;color:#000;white-space:pre;-webkit-text-stroke:0.15px currentColor;transform:scaleX(0.9744);transform-origin:left top;'>Source de lumière</div>
<div style='position:absolute;left:601.00px;top:557px;font:normal 12px/12px "Liberation Sans", sans-serif;color:#000;white-space:pre;-webkit-text-stroke:0.15px currentColor;transform:scaleX(0.9474);transform-origin:left top;'>Balance des blancs</div>
<div style='position:absolute;left:601.00px;top:579px;font:normal 12px/12px "Liberation Sans", sans-serif;color:#000;white-space:pre;-webkit-text-stroke:0.15px currentColor;transform:scaleX(0.9802);transform-origin:left top;'>Contraste</div>
<div style='position:absolute;left:601.00px;top:601px;font:normal 12px/12px "Liberation Sans", sans-serif;color:#000;white-space:pre;-webkit-text-stroke:0.15px currentColor;transform:scaleX(0.9780);transform-origin:left top;'>Saturation</div>
<div style='position:absolute;left:601.00px;top:623px;font:normal 12px/12px "Liberation Sans", sans-serif;color:#000;white-space:pre;-webkit-text-stroke:0.15px currentColor;transform:scaleX(1.0077);transform-origin:left top;'>Netteté</div>
<div style='position:absolute;left:601.00px;top:645px;font:normal 12px/12px "Liberation Sans", sans-serif;color:#000;white-space:pre;-webkit-text-stroke:0.15px currentColor;transform:scaleX(0.9798);transform-origin:left top;'>Brillance</div>
<div style='position:absolute;left:601.00px;top:667px;font:normal 12px/12px "Liberation Sans", sans-serif;color:#000;white-space:pre;-webkit-text-stroke:0.15px currentColor;transform:scaleX(0.9631);transform-origin:left top;'>Sensibilité spéctrale</div>
<div style='position:absolute;left:601.00px;top:689px;font:normal 12px/12px "Liberation Sans", sans-serif;color:#000;white-space:pre;-webkit-text-stroke:0.15px currentColor;transform:scaleX(0.9623);transform-origin:left top;'>Réponse fréquence spatiale</div>
<div style='position:absolute;left:601.00px;top:711px;font:normal 12px/12px "Liberation Sans", sans-serif;color:#000;white-space:pre;-webkit-text-stroke:0.15px currentColor;transform:scaleX(1.0104);transform-origin:left top;'>Méthode capteur</div>
<svg style="position:absolute;left:630px;top:30px" width="14" height="21"><path d="M1.5 1.5 L1.5 17.5 L5.5 13.5 L8.5 19.5 L10.5 18.5 L7.5 12.5 L12.5 12.5 Z" fill="#fff" stroke="#000" stroke-width="1" stroke-linejoin="miter"/></svg>
</div></body></html>
